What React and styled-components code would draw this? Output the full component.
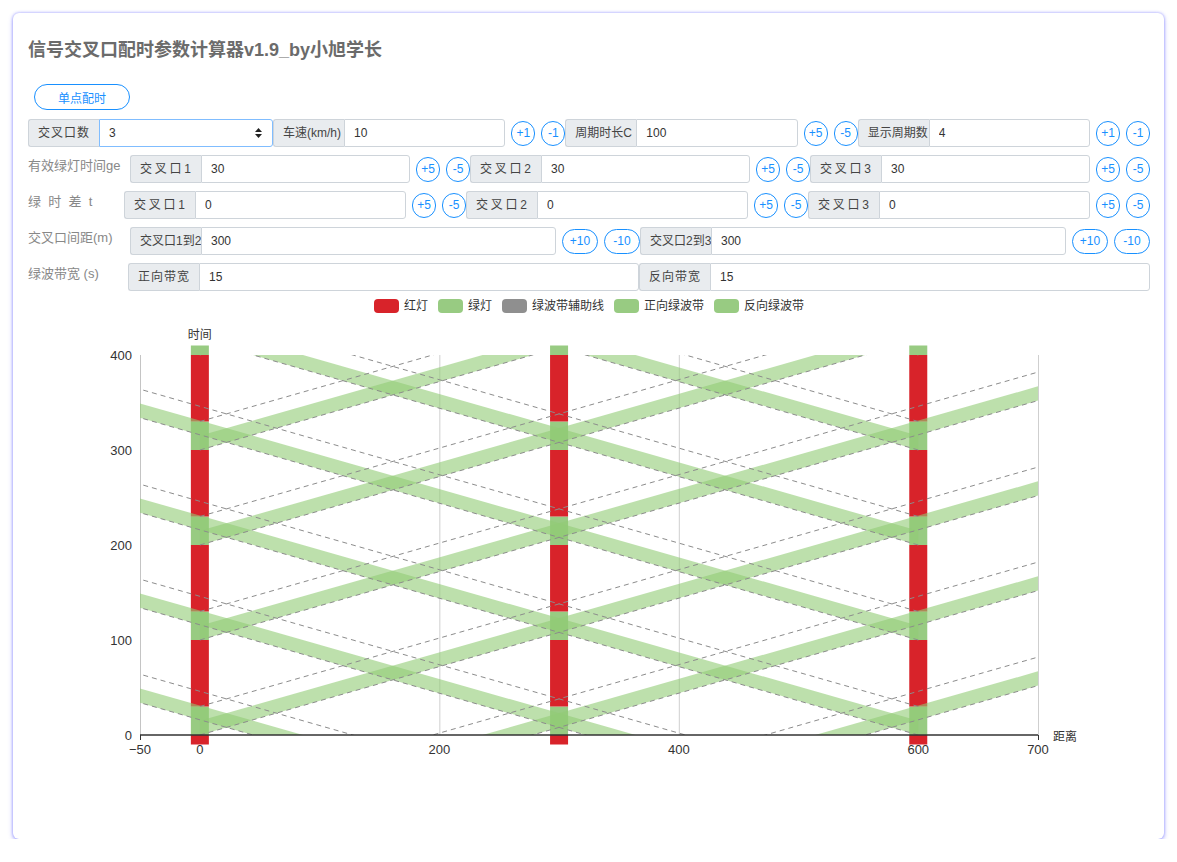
import React from 'react';
import styled, { createGlobalStyle } from 'styled-components';

const GlobalStyle = createGlobalStyle`
  html, body { margin: 0; padding: 0; background: #fff; }
  body { font-family: "Liberation Sans", "Noto Sans CJK SC", sans-serif; }
  *, *::before, *::after { box-sizing: border-box; }
`;

const BLUE = '#1890ff';
const RED = '#d8232a';
const GREEN = '#98cb82';
const BAND_FILL = 'rgba(145,204,117,0.6)';

const Page = styled.div`
  padding: 13px 13px 0 13px;
`;

const Card = styled.div`
  height: 826px;
  background: #fff;
  border-radius: 6px;
  box-shadow: 0 0 3px rgba(100, 100, 255, 0.6), 0 2px 5px rgba(100, 100, 255, 0.45);
  padding: 0 14px 0 15px;
  display: flex;
  flex-direction: column;
`;

const Title = styled.h1`
  margin: 24px 0 0;
  font-size: 18px;
  line-height: 26px;
  font-weight: bold;
  color: #6b6b6b;
`;

const PillButton = styled.button`
  margin: 21px 0 0 6px;
  align-self: flex-start;
  width: 96px;
  height: 26px;
  border: 1px solid ${BLUE};
  border-radius: 13px;
  background: #fff;
  color: ${BLUE};
  font-family: inherit;
  font-size: 12px;
  padding: 0;
`;

const Form = styled.div`
  margin-top: 9px;
  display: flex;
  flex-direction: column;
  gap: 8px;
`;

const Row = styled.div`
  display: flex;
  align-items: center;
  height: 28px;
`;

const RowLabel = styled.div`
  flex: 0 0 ${p => p.$width}px;
  align-self: flex-start;
  padding-top: 1px;
  font-size: 13px;
  line-height: 20px;
  color: #888;
  white-space: nowrap;
`;

const Group = styled.div`
  display: flex;
  flex: ${p => (p.$basis ? `0 0 ${p.$basis}px` : '1 1 0')};
  min-width: 0;
  height: 28px;
`;

const Addon = styled.div`
  flex: 0 0 71px;
  height: 28px;
  background: #e9ecef;
  border: 1px solid #ced4da;
  border-right: none;
  border-radius: 3px 0 0 3px;
  padding: 0 10px 0 9px;
  font-size: 12px;
  line-height: 26px;
  color: #444;
  white-space: nowrap;
  overflow: hidden;
  text-align: justify;
  text-align-last: justify;
`;

const Input = styled.input`
  flex: 1 1 0;
  min-width: 0;
  height: 28px;
  border: 1px solid #ced4da;
  border-radius: 0 3px 3px 0;
  padding: 0 9px;
  font-family: inherit;
  font-size: 12px;
  color: #333;
  background: #fff;
  outline: none;
`;

const SelectWrap = styled.div`
  position: relative;
  flex: 1 1 0;
  min-width: 0;
  display: flex;
`;

const Select = styled.select`
  flex: 1 1 0;
  min-width: 0;
  height: 28px;
  appearance: none;
  -webkit-appearance: none;
  border: 1px solid #80bdff;
  border-radius: 0 3px 3px 0;
  padding: 0 9px;
  font-family: inherit;
  font-size: 12px;
  color: #333;
  background: #fff;
  outline: none;
`;

const SelectArrow = styled.svg`
  position: absolute;
  right: 11px;
  top: 9px;
  pointer-events: none;
`;

const StepButton = styled.button`
  flex: 0 0 ${p => (p.$wide ? 36 : 24)}px;
  height: 25px;
  margin-left: 6px;
  padding: 0;
  border: 1px solid ${BLUE};
  border-radius: 13px;
  background: #fff;
  color: ${BLUE};
  font-family: inherit;
  font-size: 12px;
  line-height: 23px;
`;

const Legend = styled.div`
  margin-top: 8px;
  height: 14px;
  display: flex;
  justify-content: center;
  gap: 10px;
`;

const LegendItem = styled.div`
  display: flex;
  align-items: center;
  gap: 5px;
  font-size: 12px;
  line-height: 14px;
  color: #333;
`;

const Swatch = styled.span`
  width: 25px;
  height: 14px;
  border-radius: 4px;
  background: ${p => p.$color};
`;

const ChartSvg = styled.svg`
  display: block;
`;

function Field({ label, value, basis }) {
  return (
    <Group $basis={basis}>
      <Addon>{label}</Addon>
      <Input defaultValue={value} />
    </Group>
  );
}

function Steps({ up, down, wide }) {
  return (
    <>
      <StepButton $wide={wide}>{up}</StepButton>
      <StepButton $wide={wide}>{down}</StepButton>
    </>
  );
}

/* ---------- chart ---------- */
const W = 1122;
const H = 450;
const KX = 898 / 750;
const X0 = 140 + 50 * KX - 28;
const Y0 = 735 - 313;
const KY = 0.95;
const sx = x => X0 + x * KX;
const sy = t => Y0 - t * KY;

const SPEED = 10 / 3.6;
const CYCLE = 100;
const GREEN_T = 30;
const BANDW = 15;
const POSITIONS = [0, 300, 600];

function barSegments() {
  const segs = [{ from: -10, to: 0, color: RED }];
  for (let k = 0; k < 4; k++) {
    segs.push({ from: k * CYCLE, to: k * CYCLE + GREEN_T, color: GREEN });
    segs.push({ from: k * CYCLE + GREEN_T, to: (k + 1) * CYCLE, color: RED });
  }
  segs.push({ from: 400, to: 410, color: GREEN });
  return segs;
}

const pts = arr => arr.map(([x, t]) => `${sx(x).toFixed(2)},${sy(t).toFixed(2)}`).join(' ');

function Chart() {
  const ks = [-3, -2, -1, 0, 1, 2, 3, 4];
  const fwdDur = 700 / SPEED;
  const revDur = 650 / SPEED;
  const left = sx(-50);
  const right = sx(700);
  const top = sy(400);
  const bottom = sy(0);
  return (
    <ChartSvg width={W} height={H} viewBox={`0 0 ${W} ${H}`}>
      <defs>
        <clipPath id="gridClip">
          <rect x={left} y={top} width={right - left} height={bottom - top} />
        </clipPath>
      </defs>
      {[200, 400, 600, 700].map(v => (
        <line key={v} x1={sx(v) + 0.5} x2={sx(v) + 0.5} y1={top} y2={bottom} stroke="#cfcfcf" strokeWidth="1" />
      ))}
      <line x1={left + 0.5} x2={left + 0.5} y1={top} y2={bottom} stroke="#c4c4c4" strokeWidth="1" />
      {POSITIONS.map(p =>
        barSegments().map((s, i) => (
          <rect key={`${p}-${i}`} x={sx(p) - 9} width={18} y={sy(s.to)} height={(s.to - s.from) * KY} fill={s.color} />
        ))
      )}
      <g clipPath="url(#gridClip)">
        {ks.map(k => {
          const t0 = k * CYCLE;
          return (
            <g key={`b${k}`}>
              <polygon
                points={pts([[0, t0], [700, t0 + fwdDur], [700, t0 + fwdDur + BANDW], [0, t0 + BANDW]])}
                fill={BAND_FILL}
              />
              <polygon
                points={pts([[600, t0], [-50, t0 + revDur], [-50, t0 + revDur + BANDW], [600, t0 + BANDW]])}
                fill={BAND_FILL}
              />
            </g>
          );
        })}
        {ks.map(k => {
          const t0 = k * CYCLE;
          return (
            <g key={`d${k}`} stroke="#8c8c8c" strokeWidth="1" strokeDasharray="5 4" fill="none">
              <polyline points={pts([[0, t0], [700, t0 + fwdDur]])} />
              <polyline points={pts([[0, t0 + GREEN_T], [700, t0 + GREEN_T + fwdDur]])} />
              <polyline points={pts([[600, t0], [-50, t0 + revDur]])} />
              <polyline points={pts([[600, t0 + GREEN_T], [-50, t0 + GREEN_T + revDur]])} />
            </g>
          );
        })}
      </g>
      <line x1={left} x2={right} y1={bottom} y2={bottom} stroke="#333" strokeWidth="1.5" />
      <line x1={left + 0.5} x2={left + 0.5} y1={bottom} y2={bottom + 5} stroke="#333" strokeWidth="1" />
      <line x1={right + 0.5} x2={right + 0.5} y1={bottom} y2={bottom + 5} stroke="#333" strokeWidth="1" />
      <g fontFamily='"Liberation Sans", "Noto Sans CJK SC", sans-serif' fontSize="13" fill="#333">
        {[0, 100, 200, 300, 400].map(v => (
          <text key={`y${v}`} x={104} y={sy(v)} textAnchor="end" dominantBaseline="central">{v}</text>
        ))}
        {[[-50, '−50'], [0, '0'], [200, '200'], [400, '400'], [600, '600'], [700, '700']].map(([v, l]) => (
          <text key={`x${v}`} x={sx(v)} y={bottom + 14} textAnchor="middle" dominantBaseline="central">{l}</text>
        ))}
      </g>
      <g fontFamily='"Noto Sans CJK SC", sans-serif' fontSize="12" fill="#333">
        <text x={sx(0)} y={20} textAnchor="middle" dominantBaseline="central">时间</text>
        <text x={1025} y={bottom} textAnchor="start" dominantBaseline="central">距离</text>
      </g>
    </ChartSvg>
  );
}

const legendItems = [
  ['红灯', RED],
  ['绿灯', GREEN],
  ['绿波带辅助线', '#8f8f8f'],
  ['正向绿波带', GREEN],
  ['反向绿波带', GREEN],
];

export default function App() {
  return (
    <>
      <GlobalStyle />
      <Page>
        <Card>
          <Title>信号交叉口配时参数计算器v1.9_by小旭学长</Title>
          <PillButton>单点配时</PillButton>
          <Form>
            <Row>
              <Group $basis={245}>
                <Addon>交叉口数</Addon>
                <SelectWrap>
                  <Select defaultValue="3">
                    <option value="2">2</option>
                    <option value="3">3</option>
                    <option value="4">4</option>
                  </Select>
                  <SelectArrow width="7" height="10" viewBox="0 0 7 10">
                    <polygon points="0,4 3.5,0 7,4" fill="#222" />
                    <polygon points="0,6 3.5,10 7,6" fill="#222" />
                  </SelectArrow>
                </SelectWrap>
              </Group>
              <Field label="车速(km/h)" value="10" />
              <Steps up="+1" down="-1" />
              <Field label="周期时长C" value="100" />
              <Steps up="+5" down="-5" />
              <Field label="显示周期数" value="4" />
              <Steps up="+1" down="-1" />
            </Row>
            <Row>
              <RowLabel $width={102}>有效绿灯时间ge</RowLabel>
              <Field label="交叉口1" value="30" />
              <Steps up="+5" down="-5" />
              <Field label="交叉口2" value="30" />
              <Steps up="+5" down="-5" />
              <Field label="交叉口3" value="30" />
              <Steps up="+5" down="-5" />
            </Row>
            <Row>
              <RowLabel $width={96}>{'绿\u00a0\u00a0时\u00a0\u00a0差\u00a0\u00a0t'}</RowLabel>
              <Field label="交叉口1" value="0" />
              <Steps up="+5" down="-5" />
              <Field label="交叉口2" value="0" />
              <Steps up="+5" down="-5" />
              <Field label="交叉口3" value="0" />
              <Steps up="+5" down="-5" />
            </Row>
            <Row>
              <RowLabel $width={102}>交叉口间距(m)</RowLabel>
              <Field label="交叉口1到2" value="300" />
              <Steps up="+10" down="-10" wide />
              <Field label="交叉口2到3" value="300" />
              <Steps up="+10" down="-10" wide />
            </Row>
            <Row>
              <RowLabel $width={100}>绿波带宽 (s)</RowLabel>
              <Field label="正向带宽" value="15" />
              <Field label="反向带宽" value="15" />
            </Row>
          </Form>
          <Legend>
            {legendItems.map(([name, color]) => (
              <LegendItem key={name}>
                <Swatch $color={color} />
                {name}
              </LegendItem>
            ))}
          </Legend>
          <Chart />
        </Card>
      </Page>
    </>
  );
}
